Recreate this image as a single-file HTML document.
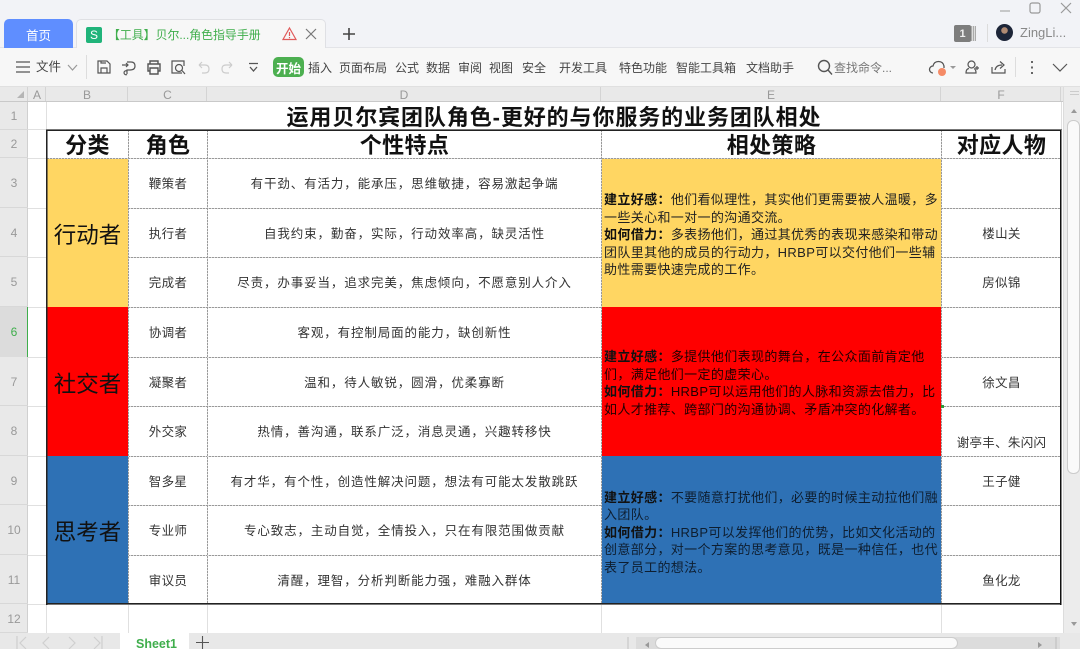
<!DOCTYPE html>
<html lang="zh">
<head>
<meta charset="utf-8">
<style>
html,body{margin:0;padding:0;width:1080px;height:649px;overflow:hidden;background:#fff}
body{position:relative;font-family:"Liberation Sans","Noto Sans CJK SC",sans-serif;color:#333}
.a{position:absolute}
.t{position:absolute;white-space:nowrap}
.c{position:absolute;display:flex;align-items:center;justify-content:center;white-space:nowrap;text-align:center}
.menu{position:absolute;top:60px;font-size:12px;line-height:16px;color:#444;white-space:nowrap}
.hl{position:absolute;background:#e0e0e0;height:1px}
.vl{position:absolute;background:#e0e0e0;width:1px}
.dh{position:absolute;height:1px;background:repeating-linear-gradient(90deg,#999 0 2px,#dcdcdc 2px 3px)}
.dv{position:absolute;width:1px;background:repeating-linear-gradient(180deg,#999 0 2px,#dcdcdc 2px 3px)}
.rn{position:absolute;left:0;width:28px;background:#e9e9e9;color:#999;font-size:12px;display:flex;align-items:center;justify-content:center;box-shadow:inset 0 -1px 0 #d8d8d8,inset -1px 0 0 #d0d0d0}
.cn{position:absolute;top:87px;height:15px;line-height:16px;background:#e9e9e9;color:#999;font-size:12px;text-align:center;box-shadow:inset -1px 0 0 #d4d4d4}
.role{font-size:12.5px;color:#333;letter-spacing:.3px}
.tr{font-size:12.5px;color:#333;letter-spacing:.88px}
.hd{font-size:22px;font-weight:bold;color:#111;line-height:28px;letter-spacing:.4px}
.grp{font-size:22.5px;color:#111}
.st{position:absolute;font-size:13px;line-height:17.6px;color:#222;white-space:nowrap;letter-spacing:.36px}
.st b{color:#111}
svg{position:absolute;overflow:visible}
svg *{fill:none;stroke:#555;stroke-width:1.2}
</style>
</head>
<body>
<!-- title strip -->
<div class="a" style="left:0;top:0;width:1080px;height:48px;background:#f2f3f7"></div>
<div class="a" style="left:0;top:47px;width:1080px;height:1px;background:#e3e4e8"></div>
<div class="c" style="left:4px;top:19px;width:69px;height:29px;background:#5f8eff;border-radius:5px 5px 0 0;color:#fff;font-size:12.5px;padding-top:1px;box-sizing:border-box">首页</div>
<div class="a" style="left:76px;top:19px;width:250px;height:29px;background:#f7f7f7;border:1px solid #dfe0e4;border-bottom:0;border-radius:5px 5px 0 0;box-sizing:border-box"></div>
<div class="c" style="left:86px;top:27px;width:16px;height:16px;background:#20b47a;border-radius:2px;color:#fff;font-size:12px">S</div>
<div class="t" style="left:108px;top:26.500px;font-size:11.900px;line-height:17px;color:#3fae4c">【工具】贝尔...角色指导手册</div>
<svg style="left:282px;top:26px" width="16" height="16"><path d="M7.500 2 L14 13.500 H1 Z" style="stroke:#e05a5a"/><path d="M7.500 6v4M7.500 11v1.200" style="stroke:#e05a5a"/></svg>
<svg style="left:304px;top:27px" width="14" height="14"><path d="M2 2L12 12M12 2L2 12" style="stroke:#777"/></svg>
<svg style="left:342px;top:27px" width="14" height="14"><path d="M7 1V13M1 7H13" style="stroke:#444;stroke-width:1.600"/></svg>
<svg style="left:1000px;top:2px" width="76" height="18"><path d="M0 9H10" style="stroke:#aaa"/><rect x="30" y="1" width="10" height="10" rx="2" style="stroke:#999"/><path d="M61 1L71 11M71 1L61 11" style="stroke:#999"/></svg>
<div class="c" style="left:954px;top:25px;width:17px;height:17px;background:#7d7d7d;border-radius:2px;color:#eee;font-size:11px;font-weight:bold">1</div>
<div class="a" style="left:971px;top:26px;width:5px;height:15px;background:repeating-linear-gradient(90deg,#aaa 0 1px,#ddd 1px 2px)"></div>
<div class="a" style="left:987px;top:24px;width:1px;height:18px;background:#dcdcdc"></div>
<div class="a" style="left:996px;top:24px;width:17px;height:17px;border-radius:50%;background:radial-gradient(circle at 50% 38%,#b08a72 0 22%,#1d2538 26%)"></div>
<div class="t" style="left:1020px;top:24px;font-size:13px;line-height:17px;color:#888">ZingLi...</div>

<!-- toolbar -->
<div class="a" style="left:0;top:48px;width:1080px;height:39px;background:#f7f7f7"></div>
<div class="a" style="left:0;top:86px;width:1080px;height:1px;background:#e0e0e0"></div>
<svg style="left:16px;top:60px" width="16" height="14"><path d="M0 2H14M0 7H14M0 12H14"/></svg>
<div class="menu" style="left:36px;font-size:12.500px;top:59px">文件</div>
<svg style="left:67px;top:64px" width="12" height="8"><path d="M1 1L5.500 6L10 1" style="stroke:#999"/></svg>
<div class="a" style="left:86px;top:55px;width:1px;height:24px;background:#ddd"></div>
<svg style="left:96px;top:60px" width="16" height="15"><path d="M2 1H11L14 4V13H2Z M5 13V8H11V13 M5 1V3H10"/></svg>
<svg style="left:121px;top:60px" width="16" height="15"><path d="M1 5H7M5 3L7 5L5 7M6 2H10Q14 2 14 6T9 10H6V14M6 11A2 2 0 1 0 6 14.500"/></svg>
<svg style="left:146px;top:60px" width="16" height="15"><path d="M4 4V1H12V4M4 11H2V4H14V11H12M4 8H12V14H4Z" style="stroke-width:1.400"/></svg>
<svg style="left:171px;top:60px" width="16" height="15"><path d="M11 13H1V1H13V6"/><circle cx="8" cy="8" r="3.500"/><path d="M11 10.500L14 14"/></svg>
<svg style="left:197px;top:60px" width="14" height="14"><path d="M2 5H8Q12 5 12 9T8 13H5M2 5L5 2M2 5L5 8" style="stroke:#ccc"/></svg>
<svg style="left:220px;top:60px" width="14" height="14"><path d="M12 5H6Q2 5 2 9T6 13H9M12 5L9 2M12 5L9 8" style="stroke:#ccc"/></svg>
<svg style="left:248px;top:62px" width="12" height="12"><path d="M1 1.500H10M2 5L5.500 9L9 5" style="stroke-width:1.300"/></svg>
<div class="c" style="left:273px;top:57px;width:31px;height:20px;background:#4caf50;border-radius:5px;color:#fff;font-size:12.500px;font-weight:bold">开始</div>
<div class="menu" style="left:308px">插入</div>
<div class="menu" style="left:339px">页面布局</div>
<div class="menu" style="left:395px">公式</div>
<div class="menu" style="left:426px">数据</div>
<div class="menu" style="left:458px">审阅</div>
<div class="menu" style="left:489px">视图</div>
<div class="menu" style="left:522px">安全</div>
<div class="menu" style="left:559px">开发工具</div>
<div class="menu" style="left:619px">特色功能</div>
<div class="menu" style="left:676px">智能工具箱</div>
<div class="menu" style="left:746px">文档助手</div>
<svg style="left:817px;top:59px" width="17" height="17"><circle cx="7" cy="7" r="5.500" style="stroke-width:1.400"/><path d="M11 11L15 15.500" style="stroke-width:1.400"/></svg>
<div class="menu" style="left:834px;color:#777">查找命令...</div>
<svg style="left:930px;top:60px" width="18" height="16"><path d="M3 13H3A3.500 3.500 0 0 1 3 6Q4 1.500 8.500 1.500T14 6V8" style="stroke-width:1.300"/></svg>
<div class="a" style="left:938px;top:68px;width:8px;height:8px;border-radius:50%;background:#f58b66"></div>
<div class="a" style="left:950px;top:66px;border:3px solid transparent;border-top:3px solid #999"></div>
<svg style="left:965px;top:60px" width="16" height="15"><circle cx="6.500" cy="4.500" r="3.500"/><path d="M4 8.500Q1 9 1 13H11Q11 9.500 9 8.500M12 6V10M10 8H14"/></svg>
<svg style="left:991px;top:60px" width="16" height="15"><path d="M1 7V13H14V9M4 10Q5 5 11 5M9 1.500L13 5L9 8.500"/></svg>
<div class="a" style="left:1015px;top:57px;width:1px;height:20px;background:#ddd"></div>
<svg style="left:1030px;top:60px" width="5" height="15"><path d="M2 1V3M2 6.500V8.500M2 12V14" style="stroke-width:1.800"/></svg>
<svg style="left:1052px;top:63px" width="16" height="9"><path d="M1 1L8 8L15 1"/></svg>

<!-- column headers -->
<div class="a" style="left:0;top:87px;width:1063px;height:15px;background:#e9e9e9"></div>
<div class="a" style="left:0;top:87px;width:28px;height:15px;box-shadow:inset -1px 0 0 #d4d4d4"></div>
<div class="a" style="left:17px;top:91px;width:0;height:0;border-left:7px solid transparent;border-bottom:7px solid #b5b5b5"></div>
<div class="cn" style="left:28px;width:18px">A</div>
<div class="cn" style="left:46px;width:82px">B</div>
<div class="cn" style="left:128px;width:79px">C</div>
<div class="cn" style="left:207px;width:394px">D</div>
<div class="cn" style="left:601px;width:340px">E</div>
<div class="cn" style="left:941px;width:120px">F</div>
<div class="a" style="left:0;top:101px;width:1063px;height:1px;background:#c9c9c9"></div>

<!-- row headers -->
<div class="rn" style="top:102px;height:28px">1</div>
<div class="rn" style="top:130px;height:28px">2</div>
<div class="rn" style="top:158px;height:50px">3</div>
<div class="rn" style="top:208px;height:49px">4</div>
<div class="rn" style="top:257px;height:50px">5</div>
<div class="rn" style="top:307px;height:50px;color:#3fae4c;background:#dcdcdc;box-shadow:inset -1px 0 0 #3fae4c">6</div>
<div class="rn" style="top:357px;height:49px">7</div>
<div class="rn" style="top:406px;height:50px">8</div>
<div class="rn" style="top:456px;height:49px">9</div>
<div class="rn" style="top:505px;height:50px">10</div>
<div class="rn" style="top:555px;height:49px">11</div>
<div class="rn" style="top:604px;height:29px">12</div>

<!-- grid lines outside table -->
<div class="hl" style="left:28px;top:129px;width:18px"></div>
<div class="hl" style="left:28px;top:158px;width:18px"></div>
<div class="hl" style="left:28px;top:208px;width:18px"></div>
<div class="hl" style="left:28px;top:257px;width:18px"></div>
<div class="hl" style="left:28px;top:307px;width:18px"></div>
<div class="hl" style="left:28px;top:357px;width:18px"></div>
<div class="hl" style="left:28px;top:406px;width:18px"></div>
<div class="hl" style="left:28px;top:456px;width:18px"></div>
<div class="hl" style="left:28px;top:505px;width:18px"></div>
<div class="hl" style="left:28px;top:555px;width:18px"></div>
<div class="hl" style="left:28px;top:604px;width:18px"></div>
<div class="vl" style="left:46px;top:102px;height:28px"></div>
<div class="vl" style="left:46px;top:604px;height:29px"></div>
<div class="vl" style="left:128px;top:604px;height:29px"></div>
<div class="vl" style="left:207px;top:604px;height:29px"></div>
<div class="vl" style="left:601px;top:604px;height:29px"></div>
<div class="vl" style="left:941px;top:604px;height:29px"></div>
<div class="vl" style="left:1061px;top:102px;height:28px"></div>

<!-- title -->
<div class="c" style="left:47px;top:101px;width:1014px;height:28px;font-size:22px;font-weight:bold;color:#111;padding-top:2px;box-sizing:border-box;letter-spacing:.9px">运用贝尔宾团队角色-更好的与你服务的业务团队相处</div>

<!-- fills -->
<div class="a" style="left:47px;top:158px;width:81px;height:149px;background:#ffd662"></div>
<div class="a" style="left:47px;top:307px;width:81px;height:149px;background:#ff0000"></div>
<div class="a" style="left:47px;top:456px;width:81px;height:148px;background:#2e71b5"></div>
<div class="a" style="left:602px;top:158px;width:339px;height:149px;background:#ffd662"></div>
<div class="a" style="left:602px;top:307px;width:339px;height:149px;background:#ff0000"></div>
<div class="a" style="left:602px;top:456px;width:339px;height:148px;background:#2e71b5"></div>

<!-- dashed lines -->
<div class="dh" style="left:47px;top:158px;width:1014px"></div>
<div class="dh" style="left:128px;top:208px;width:473px"></div>
<div class="dh" style="left:941px;top:208px;width:120px"></div>
<div class="dh" style="left:128px;top:257px;width:473px"></div>
<div class="dh" style="left:941px;top:257px;width:120px"></div>
<div class="dh" style="left:128px;top:307px;width:473px"></div>
<div class="dh" style="left:941px;top:307px;width:120px"></div>
<div class="dh" style="left:128px;top:357px;width:473px"></div>
<div class="dh" style="left:941px;top:357px;width:120px"></div>
<div class="dh" style="left:128px;top:406px;width:473px"></div>
<div class="dh" style="left:941px;top:406px;width:120px"></div>
<div class="dh" style="left:128px;top:456px;width:473px"></div>
<div class="dh" style="left:941px;top:456px;width:120px"></div>
<div class="dh" style="left:128px;top:505px;width:473px"></div>
<div class="dh" style="left:941px;top:505px;width:120px"></div>
<div class="dh" style="left:128px;top:555px;width:473px"></div>
<div class="dh" style="left:941px;top:555px;width:120px"></div>
<div class="dv" style="left:128px;top:130px;height:474px"></div>
<div class="dv" style="left:207px;top:130px;height:474px"></div>
<div class="dv" style="left:601px;top:130px;height:474px"></div>
<div class="dv" style="left:941px;top:130px;height:474px"></div>

<!-- headers -->
<div class="c hd" style="left:47px;top:132px;width:81px;height:28px">分类</div>
<div class="c hd" style="left:129px;top:132px;width:78px;height:28px">角色</div>
<div class="c hd" style="left:208px;top:132px;width:393px;height:28px">个性特点</div>
<div class="c hd" style="left:602px;top:132px;width:339px;height:28px">相处策略</div>
<div class="c hd" style="left:942px;top:132px;width:119px;height:28px">对应人物</div>

<!-- groups -->
<div class="c grp" style="left:47px;top:159px;width:81px;height:149px">行动者</div>
<div class="c grp" style="left:47px;top:308px;width:81px;height:149px">社交者</div>
<div class="c grp" style="left:47px;top:457px;width:81px;height:148px">思考者</div>

<!-- roles -->
<div class="c role" style="left:129px;top:158px;width:78px;height:49px">鞭策者</div>
<div class="c role" style="left:129px;top:208px;width:78px;height:48px">执行者</div>
<div class="c role" style="left:129px;top:257px;width:78px;height:49px">完成者</div>
<div class="c role" style="left:129px;top:307px;width:78px;height:49px">协调者</div>
<div class="c role" style="left:129px;top:357px;width:78px;height:48px">凝聚者</div>
<div class="c role" style="left:129px;top:406px;width:78px;height:49px">外交家</div>
<div class="c role" style="left:129px;top:456px;width:78px;height:48px">智多星</div>
<div class="c role" style="left:129px;top:505px;width:78px;height:49px">专业师</div>
<div class="c role" style="left:129px;top:555px;width:78px;height:48px">审议员</div>

<!-- traits -->
<div class="c tr" style="left:208px;top:158px;width:393px;height:49px">有干劲、有活力，能承压，思维敏捷，容易激起争端</div>
<div class="c tr" style="left:208px;top:208px;width:393px;height:48px">自我约束，勤奋，实际，行动效率高，缺灵活性</div>
<div class="c tr" style="left:208px;top:257px;width:393px;height:49px">尽责，办事妥当，追求完美，焦虑倾向，不愿意别人介入</div>
<div class="c tr" style="left:208px;top:307px;width:393px;height:49px">客观，有控制局面的能力，缺创新性</div>
<div class="c tr" style="left:208px;top:357px;width:393px;height:48px">温和，待人敏锐，圆滑，优柔寡断</div>
<div class="c tr" style="left:208px;top:406px;width:393px;height:49px">热情，善沟通，联系广泛，消息灵通，兴趣转移快</div>
<div class="c tr" style="left:208px;top:456px;width:393px;height:48px">有才华，有个性，创造性解决问题，想法有可能太发散跳跃</div>
<div class="c tr" style="left:208px;top:505px;width:393px;height:49px">专心致志，主动自觉，全情投入，只在有限范围做贡献</div>
<div class="c tr" style="left:208px;top:555px;width:393px;height:48px">清醒，理智，分析判断能力强，难融入群体</div>

<!-- strategy -->
<div class="st" style="left:604px;top:191px"><b>建立好感：</b>他们看似理性，其实他们更需要被人温暖，多<br>一些关心和一对一的沟通交流。<br><b>如何借力：</b>多表扬他们，通过其优秀的表现来感染和带动<br>团队里其他的成员的行动力，HRBP可以交付他们一些辅<br>助性需要快速完成的工作。</div>
<div class="st" style="left:604px;top:348px;color:#200000"><b>建立好感：</b>多提供他们表现的舞台，在公众面前肯定他<br>们，满足他们一定的虚荣心。<br><b>如何借力：</b>HRBP可以运用他们的人脉和资源去借力，比<br>如人才推荐、跨部门的沟通协调、矛盾冲突的化解者。</div>
<div class="st" style="left:604px;top:488.500px;color:#0e1e30"><b>建立好感：</b>不要随意打扰他们，必要的时候主动拉他们融<br>入团队。<br><b>如何借力：</b>HRBP可以发挥他们的优势，比如文化活动的<br>创意部分，对一个方案的思考意见，既是一种信任，也代<br>表了员工的想法。</div>

<!-- people -->
<div class="c role" style="left:942px;top:208px;width:119px;height:48px">楼山关</div>
<div class="c role" style="left:942px;top:257px;width:119px;height:49px">房似锦</div>
<div class="c role" style="left:942px;top:357px;width:119px;height:48px">徐文昌</div>
<div class="c role" style="left:942px;top:432px;width:119px;height:18px">谢亭丰、朱闪闪</div>
<div class="c role" style="left:942px;top:456px;width:119px;height:48px">王子健</div>
<div class="c role" style="left:942px;top:555px;width:119px;height:48px">鱼化龙</div>

<!-- outer borders -->
<div class="a" style="left:46px;top:129px;width:1016px;height:1px;background:#777"></div>
<div class="a" style="left:46px;top:130px;width:1016px;height:1px;background:#222"></div>
<div class="a" style="left:46px;top:603px;width:1016px;height:1px;background:#222"></div>
<div class="a" style="left:46px;top:604px;width:1016px;height:1px;background:#777"></div>
<div class="a" style="left:46px;top:130px;width:1px;height:475px;background:#222"></div>
<div class="a" style="left:47px;top:130px;width:1px;height:475px;background:rgba(40,40,40,.55)"></div>
<div class="a" style="left:1060px;top:130px;width:1px;height:475px;background:#111"></div>
<div class="a" style="left:1061px;top:130px;width:1px;height:475px;background:#888"></div>
<div class="a" style="left:941px;top:405px;width:3px;height:3px;background:#2e9a3a"></div>

<!-- vertical scrollbar -->
<div class="a" style="left:1063px;top:87px;width:17px;height:546px;background:#ececec;border-left:1px solid #dcdcdc;box-sizing:border-box"></div>
<div class="a" style="left:1070px;top:91px;width:9px;height:1px;background:#ccc"></div>
<div class="a" style="left:1070px;top:94px;width:9px;height:1px;background:#ccc"></div>
<div class="a" style="left:1071px;top:106px;border:3.500px solid transparent;border-bottom:4px solid #999"></div>
<div class="a" style="left:1067px;top:120px;width:13px;height:354px;background:#fafafa;border:1px solid #ccc;border-radius:6px;box-sizing:border-box"></div>
<div class="a" style="left:1071px;top:622px;border:3.500px solid transparent;border-top:4px solid #999"></div>

<!-- bottom sheet bar -->
<div class="a" style="left:0;top:633px;width:1080px;height:16px;background:#e8e8e8"></div>
<div class="a" style="left:120px;top:633px;width:69px;height:16px;background:#fff"></div>
<svg style="left:16px;top:636px" width="90" height="13"><path d="M1 0V13M10 1L4 7L10 13M33 1L27 7L33 13M53 1L59 7L53 13M78 1L84 7L78 13M86 0V13" style="stroke:#cfcfcf"/></svg>
<div class="t" style="left:136px;top:636px;font-size:12.500px;line-height:16px;font-weight:bold;color:#3fae4c">Sheet1</div>
<svg style="left:196px;top:636px" width="13" height="13"><path d="M6.500 0V13M0 6.500H13" style="stroke:#555;stroke-width:1.100"/></svg>
<div class="a" style="left:627px;top:637px;width:2px;height:12px;background:#d5d5d5"></div>
<div class="a" style="left:636px;top:637px;width:424px;height:12px;background:#dcdcdc"></div>
<div class="a" style="left:642px;top:642px;border:3px solid transparent;border-right:4px solid #999"></div>
<div class="a" style="left:655px;top:637px;width:303px;height:12px;background:#fafafa;border:1px solid #ccc;border-radius:6px;box-sizing:border-box"></div>
<div class="a" style="left:1038px;top:642px;border:3px solid transparent;border-left:4px solid #999"></div>
<div class="a" style="left:1055px;top:637px;width:2px;height:12px;background:#ccc"></div>
</body>
</html>
